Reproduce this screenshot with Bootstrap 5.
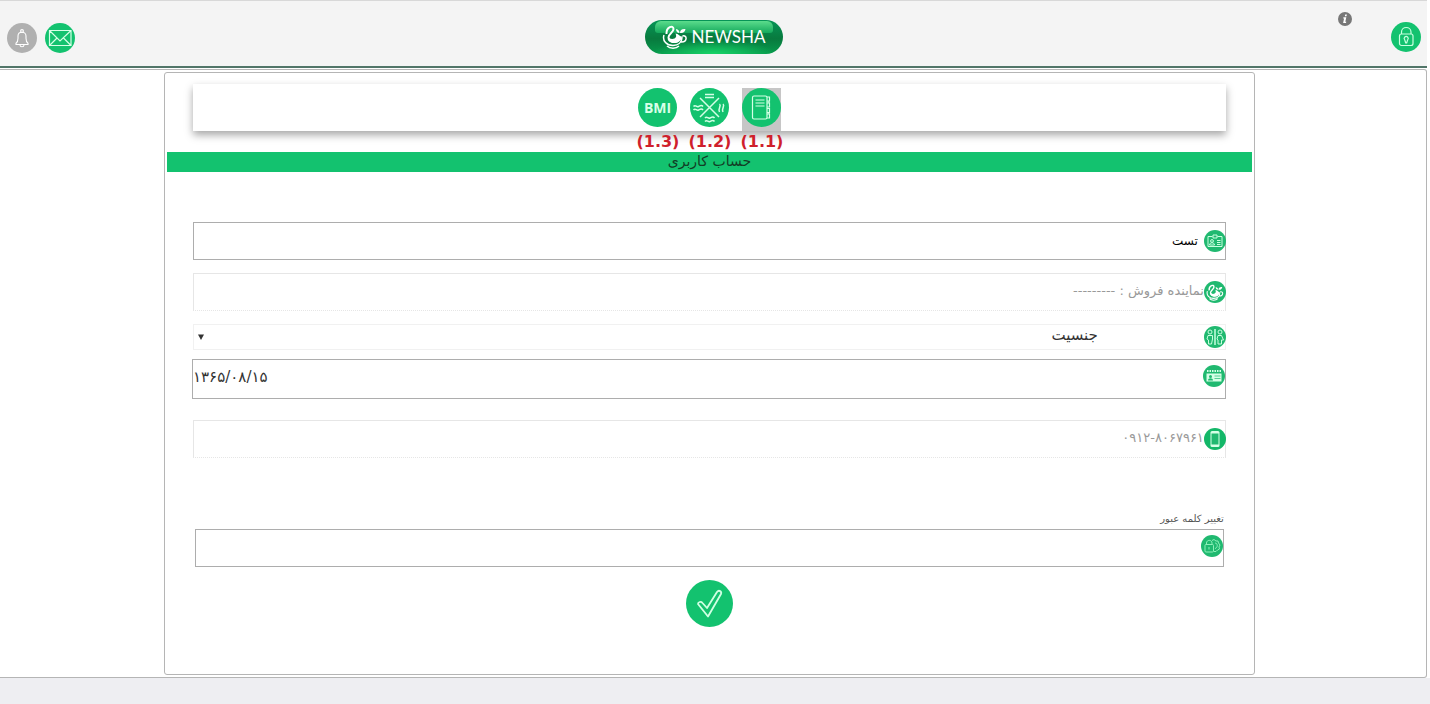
<!DOCTYPE html>
<html lang="fa">
<head>
<meta charset="utf-8">
<meta name="viewport" content="width=device-width, initial-scale=1">
<title>NEWSHA - حساب کاربری</title>
<link href="https://cdn.jsdelivr.net/npm/bootstrap@5.3.0/dist/css/bootstrap.min.css" rel="stylesheet">
<style>
  :root { --brand: #13c26f; --line: #adadad; }
  body { font-family: "DejaVu Sans", "Noto Sans", sans-serif; font-size: 16px; color: #333; background: #eeeef2; min-height: 100vh; }
  .shell { margin-right: 3px; }
  .edge { background: #fff; }
  .topbar { height: 68px; background: #f4f4f4; border-top: 1px solid #d8d8d8; border-bottom: 2px solid #517568; }
  .side { flex: 1 1 0; }
  .side-start { padding: 22px 0 0 7px; }
  .side-end { padding: 11px 6px 0 0; }
  .icon-btn { display: flex; align-items: flex-start; padding: 0; border: 0; background: none; line-height: 0; border-radius: 50%; }
  .icon-btn svg, .chip svg { display: block; }
  .lock-btn { margin: 10px 0 0 39px; }
  .brand-pill { width: 138px; height: 34px; margin-top: 19px; gap: 3px; border-radius: 17px; color: #fff; text-decoration: none;
    font: 17px/34px "Lato", sans-serif;
    background:
      radial-gradient(ellipse 62px 14px at 50% 100%, #18d468, transparent),
      linear-gradient(#079557, #087a3e 55%, #079a4c); }
  .brand-pill::before { content: ""; position: absolute; inset: 1px 10px auto; height: 12px; border-radius: 6px 6px 3px 3px; background: linear-gradient(#5bdc8c, #14a95c); }
  .brand-pill > * { position: relative; }
  .stage { background: #fff; border: 1px solid #b5b5b5; border-left: 0; border-radius: 0 3px 3px 0; margin-top: 1px; padding: 2px 0; }
  .panel { width: 76.5%; margin-left: 11.5%; padding: 11px 2px 47px; border: 1px solid #b5b5b5; border-radius: 3px; }
  .tabs-bar { height: 47px; margin: 0 26px; padding-top: 4px; gap: 13px; background: #fff; box-shadow: 0 4px 8px rgba(0,0,0,.35); }
  .tab-item { width: 39px; text-align: center; }
  .tab-item .icon-btn { height: 43px; border-radius: 0; }
  .tab-item .is-active { background: #c6c6c6; }
  .step { display: block; width: 52px; margin: 0 -6px; font: bold 16px/22px "DejaVu Sans", sans-serif; color: #cf1f2c; }
  .title-bar { margin: 21px 0 0; height: 20px; background: var(--brand); color: #123c25; font-size: 14px; line-height: 18px; text-align: center; }
  .form-area { padding: 50px 26px 0; }
  .box { border: 1px solid var(--line); background: #fff; height: 38px; }
  .box-off { border-color: #e6e6e6; border-bottom-style: dotted; }
  .agent-box { margin-top: 13px; }
  .phone-box { margin-top: 21px; }
  .box input, .box select { min-width: 0; height: 100%; padding: 0 0 4px; border: 0; background: transparent; outline: 0; color: #333; font-size: 15px; }
  .box input:disabled { color: #999; -webkit-text-fill-color: #999; opacity: 1; font-size: 13px; }
  .box input.name-input { font-size: 12px; color: #000; padding: 0 6px 0 0; }
  .chip { flex: none; margin-right: -1px; }
  .chip-top { align-self: flex-start; margin-top: 5px; margin-right: 0; }
  .gender { height: 26px; margin-top: 13px; border-color: #f1f1f1; }
  .box .gender-select { appearance: none; padding-right: 127px; line-height: 20px; }
  .caret { left: 4px; top: 9px; pointer-events: none; }
  .date-box { height: 40px; margin-top: 9px; margin-left: -1px; }
  .pass-wrap { margin: 51px 2px 0; }
  .pass-label { font-size: 10px; line-height: 20px; color: #555; }
  .send { width: 47px; margin: 13px auto 0; }
</style>
</head>
<body>
<svg width="0" height="0" class="position-absolute" aria-hidden="true">
  <symbol id="swan" viewBox="0 0 26 24">
    <path d="M4.500 9C4 2 11.500-.5 11.500 4c0 3.500-5 4.500-5 8.500 0 5 9 6 12.500.5" fill="none" stroke="#fff" stroke-width="2"/>
    <path d="M6 12c2 2 4 2.500 6.500 1.500 2-1 2-3 1-5 3 0 4 3 6 3-1 5-4 7-8 6.500C8 18 6 15.500 6 12z" fill="#fff"/>
    <path d="M2 10c-2 6 3 10.500 9 10.500 5 0 9-3 9-9M5 21c3 3 9 3 12 0M20.500 11c5-1.500 5 6.500-1.500 6" fill="none" stroke="#fff" stroke-width="1.500"/>
    <path d="M14 4c2.500.5 3.500 2 3.500 4-2.500 0-3.500-2-3.500-4zM18 8c0-3 2-4.500 5.500-4-.5 3-2.500 4.500-5.500 4z" fill="#fff"/>
  </symbol>
</svg>

<div class="edge"><div class="shell">
  <header class="topbar d-flex">
    <div class="side side-start d-flex gap-2 align-items-start">
      <button class="icon-btn" type="button" aria-label="اعلان‌ها">
        <svg width="30" height="30" viewBox="0 0 30 30" fill="none" stroke="#fff" stroke-width="1.100"><circle cx="15" cy="15" r="15" fill="#b0b0b0" stroke="none"/><circle cx="15" cy="8" r="1.400"/><path d="M9 21.500h12v-1.200c-1.500-1-2-2-2-5V13c0-5-8-5-8 0v2.300c0 3-.5 4-2 5zM13 22c0 2.400 4 2.400 4 0"/></svg>
      </button>
      <button class="icon-btn" type="button" aria-label="پیام‌ها">
        <svg width="30" height="30" viewBox="0 0 30 30" fill="none" stroke="#d5ffe6" stroke-width="1.200"><circle cx="15" cy="15" r="15" fill="#13c26f" stroke="none"/><path d="M4.500 7.500h21.500v15h-21.500zM4.500 7.500 15 18 26 7.500M4.500 22.500l7.500-7.500M26 22.500 18.500 15"/></svg>
      </button>
    </div>
    <a class="brand-pill position-relative d-flex align-items-center justify-content-center" href="#">
      <svg width="26" height="24" aria-hidden="true"><use href="#swan"/></svg><span>NEWSHA</span>
    </a>
    <div class="side side-end d-flex justify-content-end align-items-start">
      <button class="icon-btn" type="button" aria-label="راهنما">
        <svg width="14" height="14" viewBox="0 0 14 14"><circle cx="7" cy="7" r="7" fill="#777"/><path d="M7.200 2.500h1.700l-.4 1.700H6.800zM5.500 5.300h2.800l-1 4.500h1l-.3 1.200H5.100l1-4.500h-.9z" fill="#fff"/></svg>
      </button>
      <button class="icon-btn lock-btn" type="button" aria-label="خروج">
        <svg width="30" height="30" viewBox="0 0 30 30" fill="none" stroke="#c9ffdf" stroke-width="1.200"><circle cx="15" cy="15" r="15" fill="#13c26f" stroke="none"/><rect x="8.500" y="12" width="13.500" height="11.500" rx="2"/><path d="M10.500 12v-2c0-6 9.500-6 9.500 0v2M13.700 17.800a2 2 0 1 1 3 0l-1 3h-1z"/></svg>
      </button>
    </div>
  </header>

  <main class="stage">
    <section class="panel">
      <nav class="tabs-bar d-flex justify-content-center">
        <div class="tab-item">
          <button class="icon-btn" type="button" aria-label="BMI">
            <svg width="39" height="39" viewBox="0 0 39 39"><circle cx="19.500" cy="19.500" r="19.500" fill="#13c26f"/><text x="19.500" y="25" text-anchor="middle" fill="#d9ffe8" font-family="Open Sans, sans-serif" font-weight="700" font-size="14">BMI</text></svg>
          </button><span class="step" dir="ltr">(1.3)</span>
        </div>
        <div class="tab-item">
          <button class="icon-btn" type="button" aria-label="طبع">
            <svg width="39" height="39" viewBox="0 0 39 39" fill="none" stroke="#d5ffe6" stroke-width="1.500"><circle cx="19.500" cy="19.500" r="19.500" fill="#13c26f" stroke="none"/><path d="M10 10l19 19M29 10 10 29M15 6.500h9M15 9.500h9M3.500 18.500c2-2.500 3 1 5 0s3-2 4.500 0M3.500 22c2-2.500 3 1 5 0s3-2 4.500 0M15 30c2-2.500 3 1 5 0s3-2 4.500 0M15 33.500c2-2.500 3 1 5 0s3-2 4.500 0M29.500 16c2.500 2-2 4 0 8M33 16c2.500 2-2 4 0 8"/></svg>
          </button><span class="step" dir="ltr">(1.2)</span>
        </div>
        <div class="tab-item">
          <button class="icon-btn is-active" type="button" aria-label="حساب کاربری">
            <svg width="39" height="39" viewBox="0 0 39 39" fill="none" stroke="#d5ffe6" stroke-width="1.200"><circle cx="19.500" cy="19.500" r="19.500" fill="#13c26f" stroke="none"/><rect x="10.500" y="8" width="14.500" height="23" rx="1.500"/><path d="M25 9h2.500v4H25M25 15h2.500v4H25M25 20.500h2.500v4H25M25 26h2.500v4H25M27 13v2M27 24.500V26M13.500 12h9M13.500 15h9M13.500 18h9"/></svg>
          </button><span class="step" dir="ltr">(1.1)</span>
        </div>
      </nav>

      <h1 class="title-bar" dir="rtl">حساب کاربری</h1>

      <form class="form-area">
        <div class="box d-flex align-items-center">
          <input class="name-input flex-grow-1" id="name" type="text" dir="rtl" value="تست">
          <label class="chip" for="name">
            <svg role="img" aria-label="نام" width="22" height="22" viewBox="0 0 22 22" fill="none" stroke="#c9ffdf"><circle cx="11" cy="11" r="11" fill="#20b970" stroke="none"/><path d="M8.500 6.500H4v10h14v-10h-4.500M9 5h4v3H9zM13 10.500h3.500M13 12.500h3.500M13 14.500h3.500M5.500 15c0-3 5-3 5 0z"/><circle cx="8" cy="11" r="1.400"/></svg>
          </label>
        </div>

        <div class="box box-off agent-box d-flex align-items-center">
          <input class="flex-grow-1" id="agent" type="text" dir="rtl" value="نماینده فروش : ---------" disabled>
          <label class="chip" for="agent">
            <svg role="img" aria-label="نماینده فروش" width="22" height="22" viewBox="0 0 22 22"><circle cx="11" cy="11" r="11" fill="#20b970"/><use href="#swan" x="2" y="3" width="18" height="17"/></svg>
          </label>
        </div>

        <div class="box gender d-flex align-items-center position-relative">
          <select class="gender-select w-100" id="gender" dir="rtl"><option>جنسیت</option><option>زن</option><option>مرد</option></select>
          <svg class="caret position-absolute" width="6" height="6" viewBox="0 0 6 6" aria-hidden="true"><path d="M0 .5h6L3 6z" fill="#333"/></svg>
          <label class="chip position-absolute end-0" for="gender">
            <svg role="img" aria-label="جنسیت" width="22" height="22" viewBox="0 0 22 22" fill="none" stroke="#c9ffdf"><circle cx="11" cy="11" r="11" fill="#20b970" stroke="none"/><path d="M11 3v16" stroke-width="1.500"/><circle cx="6" cy="6" r="2"/><circle cx="16" cy="6" r="2"/><path d="M4 9.500h4.500V13L7.500 18h-3V14L3 13zM14 9.500h3.500L19.500 14h-2v4H14v-4l-1-1z"/></svg>
          </label>
        </div>

        <div class="box date-box d-flex align-items-center">
          <input class="flex-grow-1" id="birth" type="text" dir="ltr" value="۱۳۶۵/۰۸/۱۵">
          <label class="chip chip-top" for="birth">
            <svg role="img" aria-label="تاریخ تولد" width="22" height="22" viewBox="0 0 22 22"><circle cx="11" cy="11" r="11" fill="#20b970"/><path d="M4 6h14" stroke="#d5ffe6" stroke-width="2" stroke-dasharray="1.500 1"/><path d="M3.500 8.500h15v8h-15z" fill="#d5ffe6"/><circle cx="7.500" cy="11.500" r="1.500" fill="#20b970"/><path d="M5 15.500c0-3 5-3 5 0z" fill="#20b970"/><path d="M11.500 11h6M11.500 13.500h6" stroke="#20b970" stroke-width=".7"/></svg>
          </label>
        </div>

        <div class="box box-off phone-box d-flex align-items-center">
          <input class="flex-grow-1 text-end" id="phone" type="tel" dir="ltr" value="۰۹۱۲-۸۰۶۷۹۶۱" disabled>
          <label class="chip" for="phone">
            <svg role="img" aria-label="تلفن همراه" width="22" height="22" viewBox="0 0 22 22"><circle cx="11" cy="11" r="11" fill="#13b768"/><rect x="6.500" y="3" width="9" height="16" rx="1.500" fill="#d5ffe6"/><path d="M7.500 5.500h7v11h-7z" fill="#20b970"/></svg>
          </label>
        </div>

        <div class="pass-wrap">
          <label class="pass-label d-block" for="pass" dir="rtl">تغییر کلمه عبور</label>
          <div class="box d-flex align-items-center">
            <input class="flex-grow-1" id="pass" type="password" dir="rtl">
            <span class="chip chip-top" aria-hidden="true">
              <svg width="22" height="22" viewBox="0 0 22 22" fill="none" stroke="#8df0b8"><circle cx="11" cy="11" r="11" fill="#20b970" stroke="none"/><rect x="4" y="9.500" width="8.500" height="7.500" rx="1"/><path d="M5.500 9.500V8c0-3.500 5.500-3.500 5.500 0v1.500M8 12v2.500M11 5.500l2-1 2 1.500h2l.5 2L19 10l-1 2 .5 2-2 1-1.500 1.500h-2M14 8c3 0 3 5 0 5.500"/></svg>
            </span>
          </div>
        </div>

        <button class="icon-btn send" type="submit" aria-label="ثبت">
          <svg width="47" height="47" viewBox="0 0 47 47"><circle cx="23.500" cy="23.500" r="23.500" fill="#13c26f"/><path d="M12 24c0-2 3-3 4.500-1l4.500 5 10-16c2-2.500 5-.5 4 2L22 36.500z" fill="none" stroke="#d0ffe3" stroke-width="1.800" stroke-linejoin="round"/></svg>
        </button>
      </form>
    </section>
  </main>
</div></div>
<script src="https://cdn.jsdelivr.net/npm/bootstrap@5.3.0/dist/js/bootstrap.bundle.min.js"></script>
</body>
</html>
